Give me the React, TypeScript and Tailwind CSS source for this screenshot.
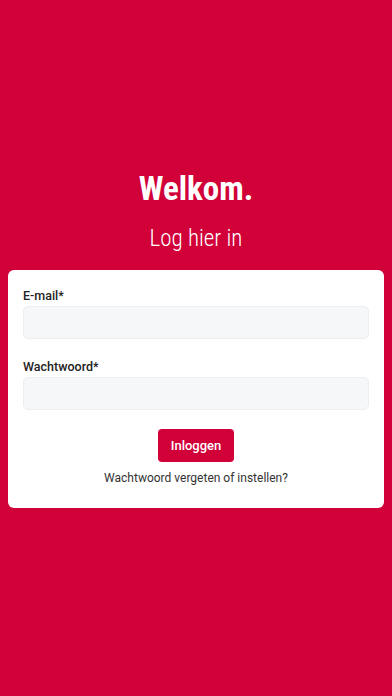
import React from 'react';

export default function App() {
  return (
    <div className="min-h-[696px] w-full bg-[#d10038] px-2 pt-[169px] font-['Roboto',sans-serif]">
      <div className="flex flex-col items-center text-white">
        <h1 className="font-['Roboto_Condensed','Roboto',sans-serif] text-[33px] leading-[40px] font-bold">Welkom.</h1>
        <p className="mt-[14px] font-['Roboto_Condensed','Roboto',sans-serif] text-[23px] leading-[32px] font-light">Log hier in</p>
      </div>
      <form className="mt-[15px] flex flex-col rounded-md bg-white px-[15px] pt-[17px] pb-[20px]">
        <label className="text-[12.5px] leading-[18px] font-medium text-[#222]">E-mail*</label>
        <input type="email" className="mt-[1px] h-[33px] rounded-[5px] border border-[#eceef0] bg-[#f6f7f8] px-3 text-sm outline-none" />
        <label className="mt-[19px] text-[12.5px] leading-[18px] font-medium text-[#222]">Wachtwoord*</label>
        <input type="password" className="mt-[1px] h-[33px] rounded-[5px] border border-[#eceef0] bg-[#f6f7f8] px-3 text-sm outline-none" />
        <button type="button" className="mx-auto mt-[19px] h-[33px] w-[76px] rounded-[4px] bg-[#d10038] text-[13px] font-medium text-white">
          Inloggen
        </button>
        <a className="mt-[6px] text-center text-[12px] leading-[20px] text-[#333]">Wachtwoord vergeten of instellen?</a>
      </form>
    </div>
  );
}
